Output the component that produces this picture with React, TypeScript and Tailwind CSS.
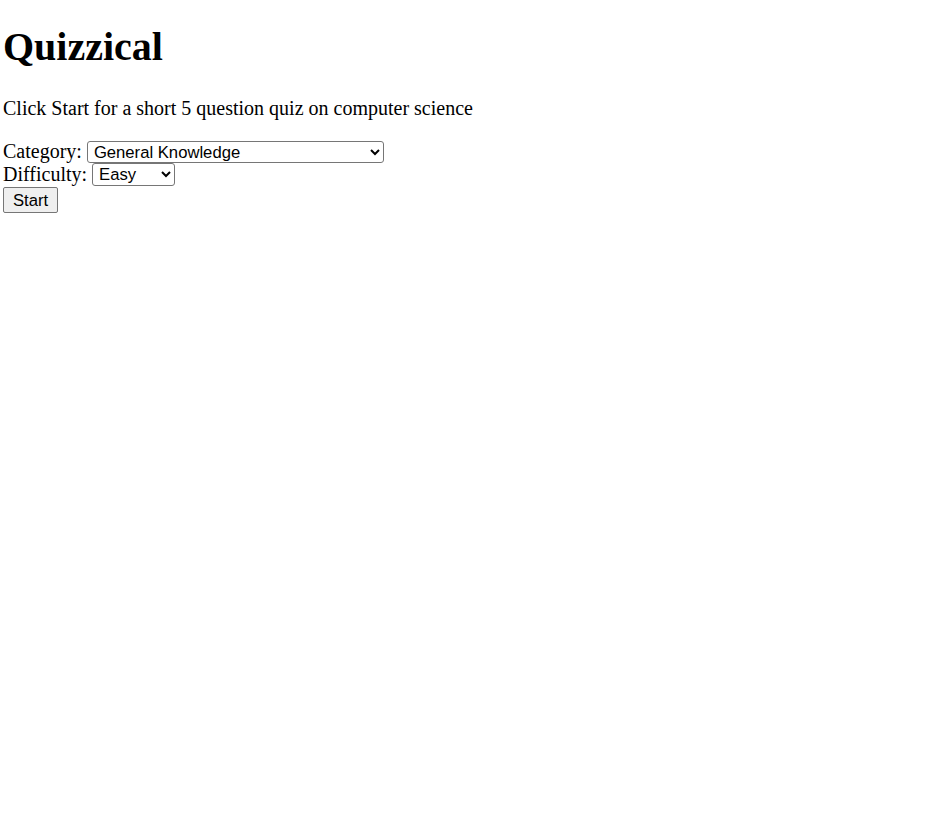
import React from "react";

export default function App() {
  return (
    <div className="pl-[3px] text-black">
      <div className="font-['Liberation_Serif',serif]">
        <h1 className="text-[40px] font-bold leading-[46px] mt-[24px]">Quizzical</h1>
        <p className="text-[20px] leading-[23px] mt-[27px]">
          Click Start for a short 5 question quiz on computer science
        </p>
        <div className="mt-[20px] text-[20px] leading-[23px]">
          <div className="flex items-center">
            <span>Category:</span>
            <select className="ml-[5px] w-[297px] h-[22px] border border-[#767676] rounded-[3px] bg-white font-['Liberation_Sans',Arial,sans-serif] text-[16.67px] pl-[2px]">
              <option>General Knowledge</option>
            </select>
          </div>
          <div className="flex items-center">
            <span>Difficulty:</span>
            <select className="ml-[5px] w-[83px] h-[23px] border border-[#767676] rounded-[3px] bg-white font-['Liberation_Sans',Arial,sans-serif] text-[16.67px] pl-[2px]">
              <option>Easy</option>
              <option>Medium</option>
              <option>Hard</option>
            </select>
          </div>
          <button className="mt-[1px] h-[26px] w-[55px] border border-[#767676] rounded-[2px] bg-[#efefef] font-['Liberation_Sans',Arial,sans-serif] text-[16.67px] leading-[19px] text-center">
            Start
          </button>
        </div>
      </div>
    </div>
  );
}
